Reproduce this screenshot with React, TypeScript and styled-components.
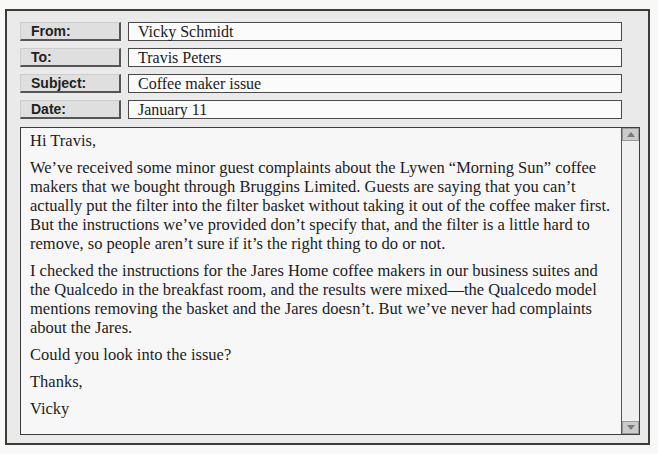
import React from "react";
import styled, { createGlobalStyle } from "styled-components";

const Global = createGlobalStyle`
  html, body { margin: 0; padding: 0; background: #f8f8f7; }
  #root { width: 658px; height: 454px; }
`;

const Frame = styled.div`
  box-sizing: border-box;
  margin: 9px 0 0 5px;
  width: 645px;
  height: 436px;
  border: 2px solid #3c3c3c;
  background: #eaeaea;
  padding: 11px 8px 8px 13px;
  display: flex;
  flex-direction: column;
  gap: 8px;
`;

const Header = styled.div`
  display: grid;
  grid-template-columns: 101px 494px;
  column-gap: 7px;
  row-gap: 7px;
  grid-auto-rows: 19px;
`;

const Label = styled.div`
  box-sizing: border-box;
  background: #dfdfdf;
  border-top: 1px solid #cdcdcd;
  border-left: 1px solid #cdcdcd;
  border-right: 2px solid #555;
  border-bottom: 2px solid #555;
  font-family: "Liberation Sans", Arial, sans-serif;
  font-weight: bold;
  font-size: 14px;
  color: #222;
  padding-left: 10px;
  display: flex;
  align-items: center;
`;

const Value = styled.div`
  box-sizing: border-box;
  background: #fbfbfb;
  border: 1px solid #4a4a4a;
  font-family: "Liberation Serif", "Times New Roman", serif;
  font-size: 16px;
  color: #1a1a1a;
  padding-left: 9px;
  display: flex;
  align-items: center;
`;

const BodyBox = styled.div`
  box-sizing: border-box;
  width: 620px;
  height: 310px;
  border: 1px solid #3c3c3c;
  display: flex;
  background: #f7f7f7;
`;

const Message = styled.div`
  flex: 1;
  border-right: 1px solid #555;
  padding: 3px 6px 0 9px;
  font-family: "Liberation Serif", "Times New Roman", serif;
  font-size: 16.5px;
  line-height: 19px;
  color: #1c1c1c;
  white-space: nowrap;
  overflow: hidden;
`;

const Para = styled.p`
  margin: 0 0 8px 0;
`;

const ScrollTrack = styled.div`
  width: 17px;
  display: flex;
  flex-direction: column;
  justify-content: space-between;
  background: #f0f0f0;
`;

const ScrollButton = styled.div`
  box-sizing: border-box;
  height: 13px;
  background: #cbcbcb;
  border: 1px solid #9a9a9a;
  display: flex;
  align-items: center;
  justify-content: center;
`;

const Arrow = ({ up }: { up?: boolean }) => (
  <svg width="8" height="5" viewBox="0 0 8 5">
    <polygon points={up ? "4,0 8,5 0,5" : "0,0 8,0 4,5"} fill="#7a7a7a" />
  </svg>
);

const fields: [string, string][] = [
  ["From:", "Vicky Schmidt"],
  ["To:", "Travis Peters"],
  ["Subject:", "Coffee maker issue"],
  ["Date:", "January 11"],
];

export default function App() {
  return (
    <>
      <Global />
      <Frame>
        <Header>
          {fields.map(([l, v]) => (
            <React.Fragment key={l}>
              <Label>{l}</Label>
              <Value>{v}</Value>
            </React.Fragment>
          ))}
        </Header>
        <BodyBox>
          <Message>
            <Para>Hi Travis,</Para>
            <Para>
              We’ve received some minor guest complaints about the Lywen “Morning Sun” coffee<br />
              makers that we bought through Bruggins Limited. Guests are saying that you can’t<br />
              actually put the filter into the filter basket without taking it out of the coffee maker first.<br />
              But the instructions we’ve provided don’t specify that, and the filter is a little hard to<br />
              remove, so people aren’t sure if it’s the right thing to do or not.
            </Para>
            <Para>
              I checked the instructions for the Jares Home coffee makers in our business suites and<br />
              the Qualcedo in the breakfast room, and the results were mixed—the Qualcedo model<br />
              mentions removing the basket and the Jares doesn’t. But we’ve never had complaints<br />
              about the Jares.
            </Para>
            <Para>Could you look into the issue?</Para>
            <Para>Thanks,</Para>
            <Para>Vicky</Para>
          </Message>
          <ScrollTrack>
            <ScrollButton>
              <Arrow up />
            </ScrollButton>
            <ScrollButton>
              <Arrow />
            </ScrollButton>
          </ScrollTrack>
        </BodyBox>
      </Frame>
    </>
  );
}
